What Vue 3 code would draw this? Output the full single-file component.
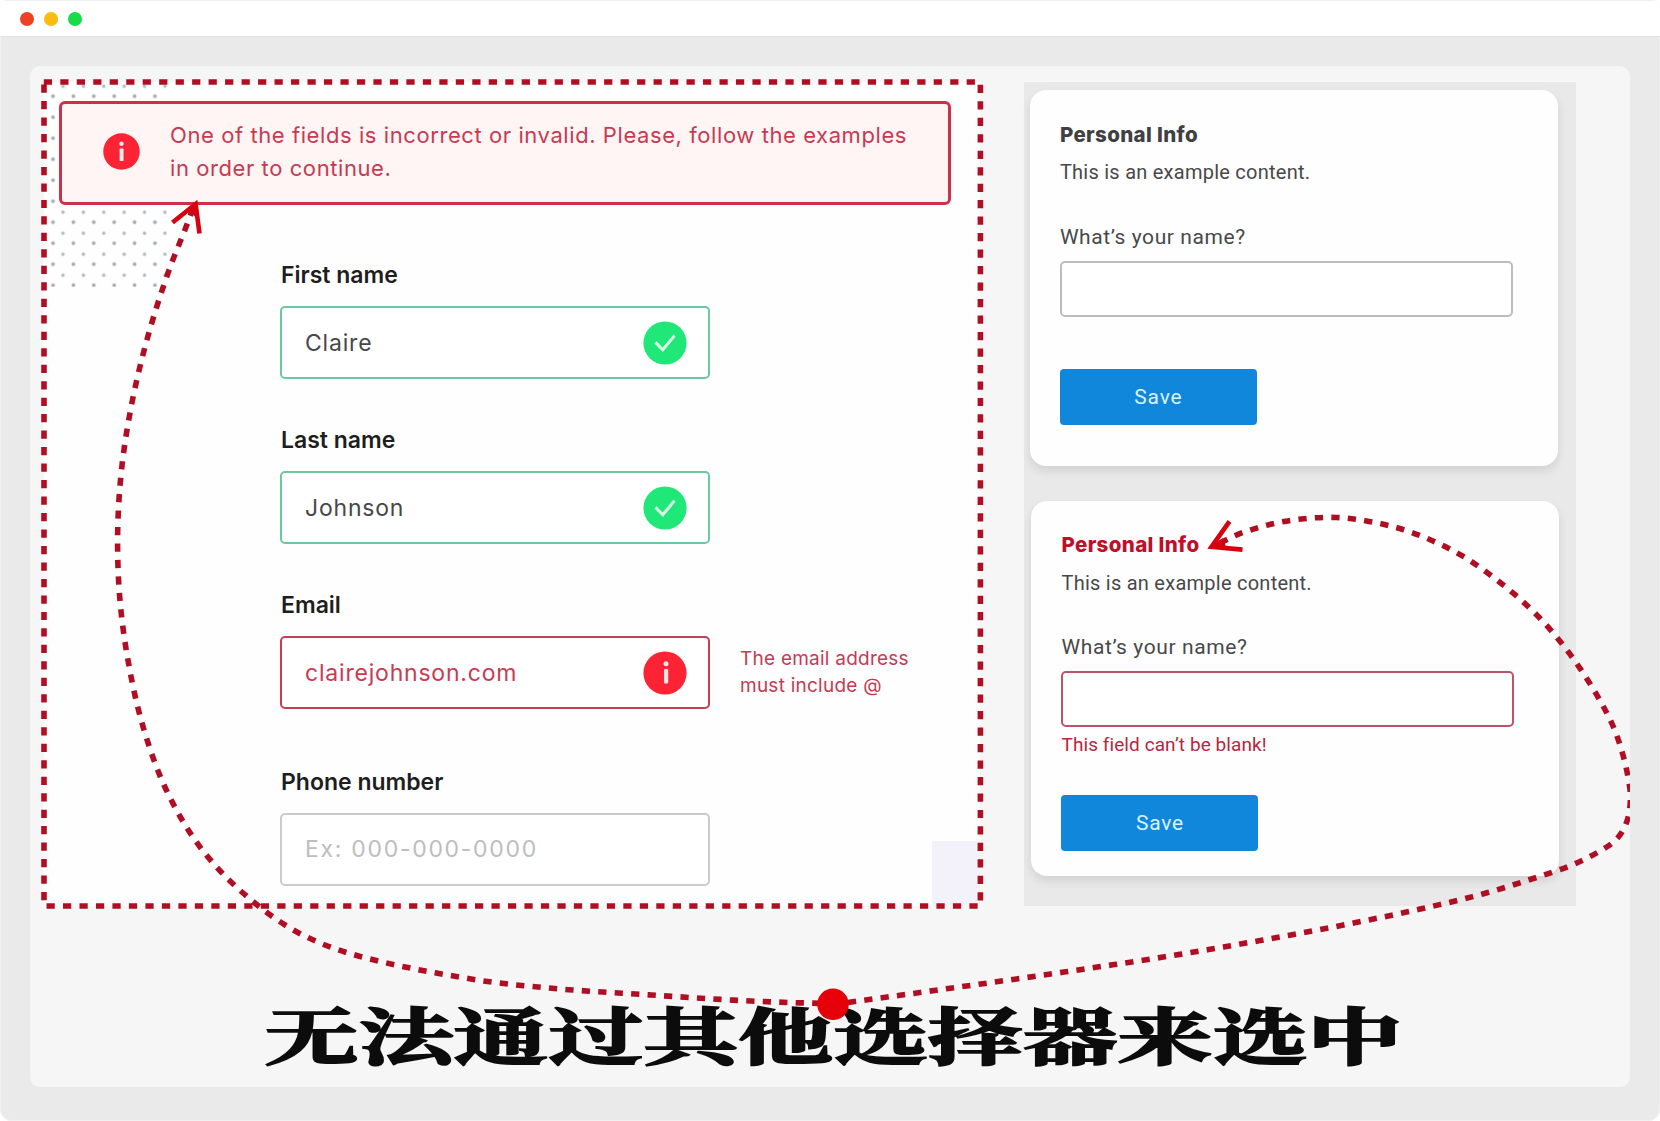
<script setup>
const fields = [
  { label: 'First name', value: 'Claire', state: 'valid' },
  { label: 'Last name', value: 'Johnson', state: 'valid' },
  { label: 'Email', value: 'clairejohnson.com', state: 'invalid', hint: ['The email address', 'must include @'] },
  { label: 'Phone number', value: 'Ex: 000-000-0000', state: 'empty' },
]

const cards = [{ invalid: false }, { invalid: true }]

// Smooth curve through a list of points (Catmull-Rom to Bezier)
function smooth(pts) {
  let d = `M${pts[0][0]} ${pts[0][1]}`
  for (let i = 0; i < pts.length - 1; i++) {
    const p0 = pts[i - 1] || pts[i]
    const p1 = pts[i]
    const p2 = pts[i + 1]
    const p3 = pts[i + 2] || p2
    const k = Math.hypot(p2[0] - p1[0], p2[1] - p1[1]) / 3
    const a = Math.hypot(p2[0] - p0[0], p2[1] - p0[1]) || 1
    const b = Math.hypot(p3[0] - p1[0], p3[1] - p1[1]) || 1
    d += ` C${p1[0] + ((p2[0] - p0[0]) / a) * k} ${p1[1] + ((p2[1] - p0[1]) / a) * k}`
    d += ` ${p2[0] - ((p3[0] - p1[0]) / b) * k} ${p2[1] - ((p3[1] - p1[1]) / b) * k} ${p2[0]} ${p2[1]}`
  }
  return d
}

const leftCurve = smooth([
  [193, 208], [186, 227], [168, 273], [148, 336], [132.5, 400], [122, 465.5], [117.7, 531],
  [119.7, 597], [128.3, 662], [143, 726.5], [165.7, 788.7], [199, 845.6], [243, 893],
  [297, 932], [358.5, 956], [471, 979], [552, 988.3], [651, 995], [750, 1001], [833, 1003.8],
])

const rightCurve = smooth([
  [1220, 543], [1239.8, 533.7], [1271.6, 524], [1304, 518.7], [1336.5, 517.5], [1369, 521.4],
  [1401.4, 529], [1432.4, 540.7], [1462, 555.7], [1489, 574], [1515, 594.7], [1539, 617.3],
  [1560.6, 642], [1580, 668.3], [1597.8, 696.7], [1613, 726], [1623.5, 757], [1630, 789.3],
  [1630, 806], [1626.7, 822], [1619, 836.3], [1606.7, 847], [1577.3, 862.7], [1546, 874.3],
  [1483.5, 893.7], [1419, 909.3], [1340, 925.7], [1257.7, 941], [1176, 955], [1078, 970],
  [980.7, 984], [833, 1004.5],
])
</script>

<template>
  <div class="window">
    <header class="titlebar">
      <span class="light red"></span>
      <span class="light yellow"></span>
      <span class="light green"></span>
    </header>

    <main class="board">
      <div class="examples">
        <section class="signup">
          <div class="dots"></div>
          <div class="corner"></div>

          <div class="alert">
            <svg class="info" width="37" height="37" viewBox="0 0 44 44">
              <circle cx="22" cy="22" r="21.7" fill="#fc2335" />
              <circle cx="22" cy="12.8" r="2.6" fill="#ffecec" />
              <rect x="19.8" y="18.4" width="4.6" height="15" rx="1" fill="#ffecec" />
            </svg>
            <p class="alert-text">
              One of the fields is incorrect or invalid. Please, follow the examples<br />in order to continue.
            </p>
          </div>

          <div class="form">
            <div v-for="f in fields" :key="f.label" class="field" :class="f.state">
              <label class="label">{{ f.label }}</label>
              <div class="row">
                <div class="input">
                  <span class="value">{{ f.value }}</span>
                  <svg v-if="f.state === 'valid'" width="44" height="44" viewBox="0 0 44 44">
                    <circle cx="22" cy="22" r="21.6" fill="#1fe878" />
                    <path d="M12.5 21.4l7.3 7.4L31.5 14.6" fill="none" stroke="#d9fbe6" stroke-width="3" />
                  </svg>
                  <svg v-if="f.state === 'invalid'" width="44" height="44" viewBox="0 0 44 44">
                    <circle cx="22" cy="22" r="21.6" fill="#fc2335" />
                    <circle cx="23" cy="12.8" r="2.5" fill="#ffe3e3" />
                    <rect x="21" y="18" width="4.2" height="14.5" rx="1" fill="#ffe3e3" />
                  </svg>
                </div>
                <p v-if="f.hint" class="hint">{{ f.hint[0] }}<br />{{ f.hint[1] }}</p>
              </div>
            </div>
          </div>
        </section>

        <section class="cards">
          <article v-for="(c, i) in cards" :key="i" class="card" :class="{ invalid: c.invalid }">
            <h2>Personal Info</h2>
            <p class="desc">This is an example content.</p>
            <label class="question">What’s your name?</label>
            <div class="textbox"></div>
            <p v-if="c.invalid" class="error">This field can’t be blank!</p>
            <button class="save">Save</button>
          </article>
        </section>
      </div>

      <div class="caption"><span>无法通过其他选择器来选中</span></div>

      <svg class="overlay" width="1600" height="1021" viewBox="30 66 1600 1021">
        <g fill="none" stroke="#b00e23" stroke-width="5.6" stroke-dasharray="8.24 8.24">
          <path d="M43.8 82H980.4V906H44V82" />
          <path :d="leftCurve" />
          <path :d="rightCurve" />
        </g>
        <g fill="none" stroke="#d6000f" stroke-width="4.6">
          <path d="M172.5 222.5L195.6 204L199.5 233.5" />
          <path d="M1229.5 521.3L1211.5 546.8L1242.5 549.6" />
        </g>
        <path d="M196 203l-7 8 7.5 7zM1210 547l13-9 3 9z" fill="#d6000f" />
        <circle cx="833" cy="1004.3" r="15.8" fill="#e60009" />
      </svg>
    </main>
  </div>
</template>

<style>
body {
  background: #fff;
}
</style>

<style scoped>
.window {
  box-sizing: border-box;
  width: 1660px;
  height: 1121px;
  background: #eaeaea;
  border-radius: 8px 8px 12px 12px;
  box-shadow: inset 0 0 0 1px #f1f1f1;
  overflow: hidden;
  display: flex;
  flex-direction: column;
}
p,
h2 {
  margin: 0;
}
.titlebar {
  box-sizing: border-box;
  height: 37px;
  background: #fff;
  border-top: 1px solid #eee;
  border-bottom: 1px solid #e2e2e2;
  display: flex;
  align-items: center;
  gap: 10px;
  padding-left: 20px;
}
.light {
  width: 14px;
  height: 14px;
  border-radius: 50%;
}
.red { background: #ec4125; }
.yellow { background: #f9bb0d; }
.green { background: #16dc4a; }

.board {
  position: relative;
  box-sizing: border-box;
  width: 1600px;
  height: 1021px;
  margin: 29px 30px 0;
  padding: 16px 0 0 14px;
  background: #f6f6f6;
  border-radius: 10px;
  overflow: hidden;
}
.examples {
  display: flex;
  gap: 44px;
  height: 824px;
}

.signup {
  position: relative;
  box-sizing: border-box;
  width: 936px;
  height: 824px;
  padding-top: 19px;
  background: #fefefe;
  font-family: Inter, "Liberation Sans", sans-serif;
}
.dots {
  position: absolute;
  left: 4px;
  top: 0;
  width: 119px;
  height: 205px;
  background-image:
    radial-gradient(circle, #a4abb3 1.2px, transparent 2.4px),
    radial-gradient(circle, #b4bac1 1.1px, transparent 2.3px);
  background-size: 20.4px 21px;
  background-position: -5.2px 3.7px, 4.8px -6.3px;
}
.corner {
  position: absolute;
  right: 0;
  bottom: 0;
  width: 48px;
  height: 65px;
  background: #f3f2fa;
}
.alert {
  position: relative;
  box-sizing: border-box;
  width: 892px;
  height: 104px;
  margin-left: 15px;
  border: 3px solid #cb3149;
  border-radius: 6px;
  background: #fff5f4;
  display: flex;
  align-items: center;
  padding: 0 0 3px 41px;
}
.alert-text {
  margin-left: 30px;
  font-size: 22px;
  line-height: 33px;
  letter-spacing: 0.58px;
  color: #c63a52;
  white-space: nowrap;
}
.form {
  display: flex;
  flex-direction: column;
  gap: 46px;
  margin: 55px 0 0 236px;
}
.label {
  display: block;
  margin: 0 0 16px 1px;
  font-size: 23px;
  line-height: 30px;
  font-weight: 600;
  letter-spacing: 0;
  color: #1e1e20;
}
.row {
  display: flex;
  align-items: center;
  gap: 30px;
}
.input {
  box-sizing: border-box;
  width: 430px;
  height: 73px;
  border: 2px solid #6cc8a0;
  border-radius: 5px;
  display: flex;
  align-items: center;
  justify-content: space-between;
  padding: 0 21px 0 23px;
  background: #fff;
}
.value {
  font-size: 23px;
  letter-spacing: 0.8px;
  color: #47474a;
}
.invalid .input {
  border-color: #c53e56;
}
.invalid .value {
  color: #cb3a52;
}
.empty {
  margin-top: 11.5px;
}
.empty .input {
  border-color: #cbcbcd;
}
.empty .value {
  color: #bdbdbf;
  letter-spacing: 1.7px;
}
.hint {
  font-size: 19px;
  line-height: 26.5px;
  letter-spacing: 0.24px;
  color: #c63a55;
  white-space: nowrap;
}

.cards {
  box-sizing: border-box;
  width: 552px;
  height: 824px;
  padding: 7.5px 0 0 5.5px;
  background: #e9e9e9;
  display: flex;
  flex-direction: column;
  gap: 35px;
  font-family: Roboto, "Liberation Sans", sans-serif;
  color: #48484a;
}
.card {
  box-sizing: border-box;
  width: 528px;
  height: 376.2px;
  padding: 30px 0 0 30.4px;
  border-radius: 16px;
  background: #fefefe;
  box-shadow: 0 5px 10px rgba(0, 0, 0, 0.1);
}
.card h2 {
  font: 800 20.5px/30px Inter, "Liberation Sans", sans-serif;
  letter-spacing: 0.35px;
  color: #404042;
}
.desc {
  margin-top: 7.8px;
  font-size: 20px;
  line-height: 30px;
  letter-spacing: 0.25px;
}
.question {
  display: block;
  margin-top: 34.5px;
  font-size: 21px;
  line-height: 30px;
  letter-spacing: 0.6px;
}
.textbox {
  box-sizing: border-box;
  width: 453px;
  height: 56px;
  margin-top: 9px;
  border: 2px solid #bdbdbd;
  border-radius: 5px;
  background: #fff;
}
.save {
  display: block;
  width: 197px;
  height: 55.5px;
  margin-top: 52.6px;
  padding: 0;
  border: 0;
  border-radius: 4px;
  background: #1087da;
  color: #d8f3ff;
  font: 400 21px Roboto, "Liberation Sans", sans-serif;
  letter-spacing: 0.8px;
}
.card.invalid {
  margin-left: 1.6px;
  padding-top: 29.5px;
  height: 375px;
}
.card.invalid h2 {
  color: #c00f28;
}
.card.invalid .textbox {
  border-color: #bf5266;
}
.error {
  margin-top: 5.5px;
  font-size: 19px;
  line-height: 24px;
  letter-spacing: 0.08px;
  color: #b82640;
}
.card.invalid .save {
  margin-top: 38.5px;
}

.caption {
  display: flex;
  justify-content: center;
  width: 1578px;
  margin-top: 88px;
}
.caption span {
  font-family: "Noto Serif CJK SC", "Noto Sans CJK SC", serif;
  font-weight: 700;
  font-size: 62px;
  line-height: 80px;
  color: #0c0c0c;
  -webkit-text-stroke: 1.8px #0c0c0c;
  white-space: nowrap;
  transform: scaleX(1.53);
}
.overlay {
  position: absolute;
  left: 0;
  top: 0;
}
</style>
